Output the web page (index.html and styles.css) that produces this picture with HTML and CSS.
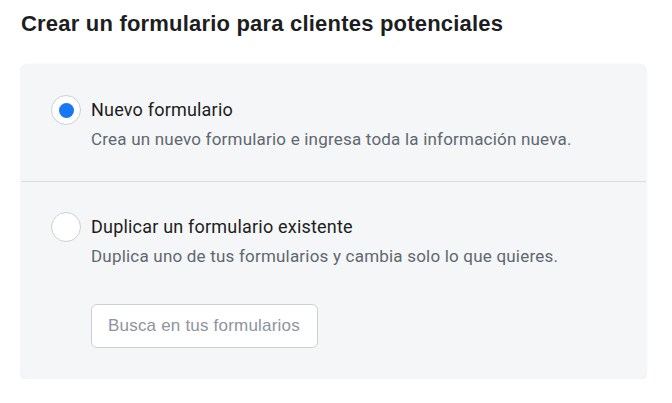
FILE: index.html
```html
<!DOCTYPE html>
<html lang="es">
<head>
<meta charset="utf-8">
<link rel="stylesheet" href="styles.css">
</head>
<body>
<div class="page">
  <h1 class="title">Crear un formulario para clientes potenciales</h1>
  <div class="card">
    <div class="option option-first">
      <span class="radio radio-checked"><span class="dot"></span></span>
      <div class="text">
        <div class="opt-title">Nuevo formulario</div>
        <div class="opt-desc">Crea un nuevo formulario e ingresa toda la información nueva.</div>
      </div>
    </div>
    <div class="option option-second">
      <span class="radio"></span>
      <div class="text">
        <div class="opt-title">Duplicar un formulario existente</div>
        <div class="opt-desc">Duplica uno de tus formularios y cambia solo lo que quieres.</div>
        <div class="search">Busca en tus formularios</div>
      </div>
    </div>
  </div>
</div>
</body>
</html>
```

FILE: styles.css
```css
html, body {
  margin: 0;
  padding: 0;
  background: #ffffff;
}
.page {
  padding: 12px 26px 0 21px;
  width: 625px;
}
.title {
  margin: 0;
  font-family: "Liberation Sans", Arial, sans-serif;
  font-weight: bold;
  font-size: 22px;
  letter-spacing: 0.2px;
  line-height: 24px;
  color: #1c1e21;
}
.card {
  margin-top: 28px;
  width: 625px;
  background: #f5f6f7;
  border-radius: 6px;
  box-shadow: 0 1px 3px rgba(0, 0, 0, 0.08), 0 0 1px rgba(0, 0, 0, 0.08);
  font-family: Roboto, "Liberation Sans", sans-serif;
}
.option {
  display: flex;
  align-items: flex-start;
  gap: 10px;
}
.option-first {
  padding: 31px 30px 28px;
  border-bottom: 1px solid #dadde1;
}
.option-second {
  padding: 30px 30px 31px;
}
.radio {
  box-sizing: border-box;
  width: 30px;
  height: 30px;
  flex: none;
  border-radius: 50%;
  background: #ffffff;
  border: 1px solid #ccd0d5;
  display: flex;
  align-items: center;
  justify-content: center;
}
.dot {
  width: 15px;
  height: 15px;
  border-radius: 50%;
  background: #1877f2;
}
.text {
  display: flex;
  flex-direction: column;
  align-items: flex-start;
}
.opt-title {
  font-size: 18px;
  letter-spacing: 0.2px;
  line-height: 30px;
  color: #1c1e21;
}
.opt-desc {
  font-size: 17px;
  letter-spacing: 0.2px;
  line-height: 28px;
  color: #606770;
}
.search {
  margin-top: 34px;
  box-sizing: border-box;
  width: 227px;
  height: 44px;
  padding: 0 16px;
  background: #ffffff;
  border: 1px solid #ccd0d5;
  border-radius: 6px;
  font-family: "Liberation Sans", Arial, sans-serif;
  font-size: 17px;
  letter-spacing: 0.2px;
  line-height: 42px;
  color: #8d949e;
}
```
